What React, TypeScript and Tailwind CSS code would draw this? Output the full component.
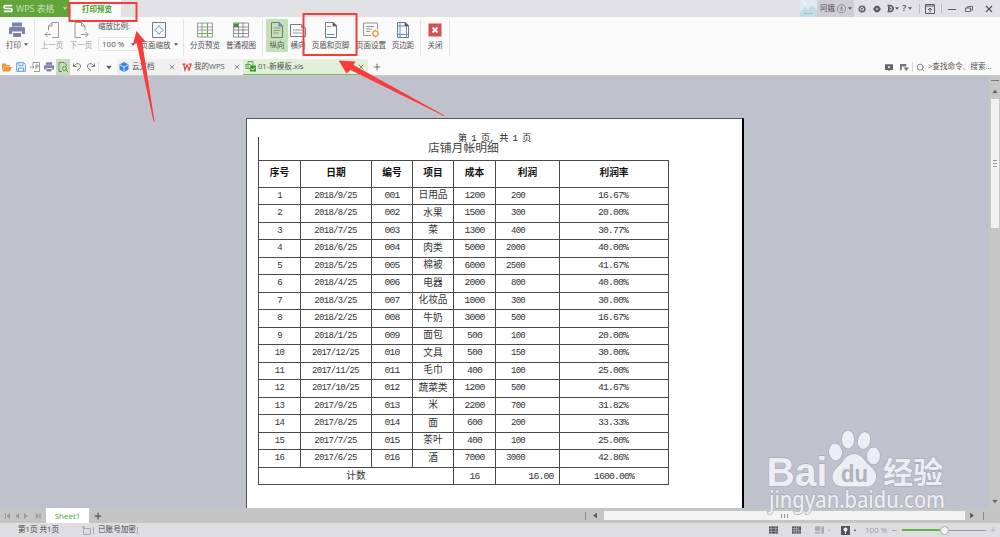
import type { ReactNode } from 'react';
import { FiSearch, FiX, FiPlus } from 'react-icons/fi';

const columns = 'grid grid-cols-[42px_71px_41px_41px_42px_64px_109px]';

const headers = ['序号', '日期', '编号', '项目', '成本', '利润', '利润率'];

const rows = [
    ['2018/9/25', '日用品', '1200', '200', '16.67%'],
    ['2018/8/25', '水果', '1500', '300', '20.00%'],
    ['2018/7/25', '菜', '1300', '400', '30.77%'],
    ['2018/6/25', '肉类', '5000', '2000', '40.00%'],
    ['2018/5/25', '棉被', '6000', '2500', '41.67%'],
    ['2018/4/25', '电器', '2000', '800', '40.00%'],
    ['2018/3/25', '化妆品', '1000', '300', '30.00%'],
    ['2018/2/25', '牛奶', '3000', '500', '16.67%'],
    ['2018/1/25', '面包', '500', '100', '20.00%'],
    ['2017/12/25', '文具', '500', '150', '30.00%'],
    ['2017/11/25', '毛巾', '400', '100', '25.00%'],
    ['2017/10/25', '蔬菜类', '1200', '500', '41.67%'],
    ['2017/9/25', '米', '2200', '700', '31.82%'],
    ['2017/8/25', '面', '600', '200', '33.33%'],
    ['2017/7/25', '茶叶', '400', '100', '25.00%'],
    ['2017/6/25', '酒', '7000', '3000', '42.86%'],
];

function Caret({ className = '' }: { className?: string }) {
    return (
        <svg viewBox="0 0 6 4" className={`w-[4px] h-[3px] shrink-0 ${className}`}>
            <path d="M0 0h6L3 4z" fill="currentColor" />
        </svg>
    );
}

function Tool({ icon, label, className, caret }: { icon: ReactNode; label: string; className: string; caret?: boolean }) {
    return (
        <div className={`h-[33px] mt-[2px] shrink-0 flex flex-col items-center ${className}`}>
            <svg viewBox="0 0 16 16" fill="none" stroke="#77797c" strokeWidth="1" className="w-[16px] h-[16px] mt-[2.5px] shrink-0">{icon}</svg>
            <div className="mt-[2px] flex items-center gap-[3px] leading-[10px] whitespace-nowrap">
                <span>{label}</span>
                {caret && <Caret />}
            </div>
        </div>
    );
}

function Divider({ className = '' }: { className?: string }) {
    return <div className={`w-px h-[37px] mt-[2px] bg-[#e4e4e5] shrink-0 ${className}`}></div>;
}

const printerIcon = (
    <g stroke="none" fill="#7f80b0">
        <rect x="3" y="0.5" width="10" height="4" />
        <path d="M0 6.5q0-1.500 1.500-1.500h13q1.500 0 1.500 1.500V12h-3V9.500H3V12H0z" />
        <rect x="4" y="11" width="8" height="4" />
    </g>
);

const pageIcon = <path d="M2.500 .5h7.500l3.500 3.500v11.500h-11zM10 .5V4h3.500" />;

function TitleBar() {
    return (
        <div className="h-[17px] flex items-center bg-[#e2e2e4] text-[#555]">
            <div className="w-[69px] h-full bg-[#62a53b] flex items-center text-[#c8e1b9]">
                <svg viewBox="0 0 12 10" className="w-[10px] h-[9px] ml-[3px]">
                    <path d="M11 1.500H3.200Q1.200 1.500 1.200 3.200T3.200 5H9q1.800 0 1.800 1.800T9 8.500H1" fill="none" stroke="#fff" strokeWidth="2" />
                </svg>
                <span className="ml-[3px] w-[47px] whitespace-nowrap text-[8.900px]">WPS 表格</span>
                <Caret />
            </div>
            <div className="ml-[2px] w-[50px] h-full bg-[#fafafa] text-[#4c9b2f] text-[7.500px] font-bold flex items-center justify-center pl-[2px] pt-[2px]">打印预览</div>
            <div className="flex-1"></div>
            <svg viewBox="0 0 17 17" className="w-[17px] h-[17px]">
                <rect width="17" height="17" fill="#dfebf0" />
                <circle cx="5" cy="3" r="1.500" fill="#edf3f5" />
                <path d="M0 12l5-5 3 3 4-5 5 5v7H0z" fill="#c4dce6" />
                <path d="M4 13.500h9" stroke="#8fb5c4" strokeDasharray="2 1" />
            </svg>
            <div className="w-[37px] h-full bg-[#cfcfd1] flex items-center pl-[3px] gap-[2px] text-[7.500px]">
                <span>阿娥</span>
                <svg viewBox="0 0 10 10" className="w-[9px] h-[9px] shrink-0" fill="none" stroke="#777">
                    <path d="M3 1h4l2.500 3v3L7 9.500H3L.5 7V4zM3 4.500h4M3.500 7h3M5 3v3" strokeWidth=".8" />
                </svg>
                <Caret />
            </div>
            <svg viewBox="0 0 10 10" className="w-[8px] h-[8px] ml-[4px]" fill="none" stroke="#5d5d5f" strokeWidth="1.800">
                <circle cx="5" cy="5" r="3.600" /><path d="M2 2.500l3 2.500 3-3M5 5l-.5 4" strokeWidth="1.200" />
            </svg>
            <svg viewBox="0 0 10 10" className="w-[8px] h-[8px] ml-[7px]" fill="#5d5d5f">
                <path d="M3 1h4l3 4-3 4H3L0 5z" /><path d="M3.500 5h3" stroke="#ddd" strokeWidth="1.500" />
            </svg>
            <div className="ml-[6px] w-[15px] flex items-center gap-[1px]">
                <svg viewBox="0 0 8 10" className="w-[7px] h-[9px]" fill="none" stroke="#5d5d5f" strokeWidth="1.800"><path d="M.5 1.500h3.500q3 1 3 3.500T4 8.500H.5M2 1v8M3 5h2" /></svg>
                <Caret />
            </div>
            <div className="w-[17px] text-[9.500px] font-semibold flex items-center gap-[2px]">
                <span>?</span>
                <Caret />
            </div>
            <div className="w-px h-[9px] bg-[#b8b8ba]"></div>
            <svg viewBox="0 0 10 10" className="w-[10px] h-[10px] ml-[5px]" fill="none" stroke="#5d5d5f">
                <path d="M.5.5h9v9h-9zM.5 2h9" /><path d="M5 8.500V4M3 6l2-2 2 2" />
            </svg>
            <div className="w-px h-[9px] bg-[#b8b8ba] ml-[6px]"></div>
            <svg viewBox="0 0 8 8" className="w-[8px] h-[8px] ml-[6px]" stroke="#555"><path d="M0 4.500h8" /></svg>
            <svg viewBox="0 0 8 8" className="w-[8px] h-[8px] ml-[9px]" fill="none" stroke="#666"><path d="M.5 3h5v3.500h-5zM2.500 3V1.500h5v3.500h-2" /></svg>
            <svg viewBox="0 0 8 8" className="w-[8px] h-[8px] ml-[12px] mr-[7px]" stroke="#555" strokeWidth="1.200"><path d="M1 1l6 6M7 1l-6 6" /></svg>
        </div>
    );
}

function Ribbon() {
    return (
        <div className="h-[42px] flex bg-[#fafafa] text-[7.500px] text-[#4f4f50]">
            <Tool className="w-[34px]" icon={printerIcon} label="打印" caret />
            <Divider />
            <Tool className="ml-[3px] w-[28px] text-[#a0a0a1] [&>svg]:opacity-75" label="上一页" icon={<><path d="M4.500 8.500V4L8 .5h6.500v15H8M8 .5V4H4.500" /><path d="M7 12.500H1M3.500 10L1 12.500 3.500 15" /></>} />
            <Tool className="ml-px w-[28px] text-[#a0a0a1] [&>svg]:opacity-75" label="下一页" icon={<><path d="M12 8.500V4L8.500.5H2v15h6M8.500.5V4H12" /><path d="M8 12.500h7M12.500 10l2.500 2.500-2.500 2.500" /></>} />
            <div className="ml-[3px] w-[40px] flex flex-col">
                <div className="mt-[4px] h-[10px] leading-[10px] whitespace-nowrap">缩放比例:</div>
                <div className="mt-[6px] h-[14px] border border-[#e5e5e6] flex items-center justify-between pl-[3px] pr-[2px] text-[8px] leading-[10px]">
                    <span>100 %</span>
                    <Caret />
                </div>
            </div>
            <Tool className="ml-[2px] w-[38px]" label="页面缩放" caret icon={<><path d="M1.500.5h13v15h-13z" /><path d="M6 6.500L8 3.500l2 3M6 9.500l2 3 2-3M6 6l-2.500 2L6 10M10 6l2.500 2L10 10" stroke="#6f9fe0" /></>} />
            <Divider className="ml-[5px]" />
            <Tool className="ml-[3px] w-[36px]" label="分页预览" icon={<><path d="M.5 1h15v14H.5zM.5 5h15M.5 8h15M5 1v14" strokeOpacity=".7" /><path d="M.5 11.500h15M10.500 1v14" stroke="#71aa55" /></>} />
            <Tool className="w-[36px]" label="普通视图" icon={<><path d="M.5 1h15v14H.5zM.5 5h15M.5 8h15M.5 11.500h15M5.500 1v14M10 1v14" strokeOpacity=".8" /><path d="M1 1.500h4.500v3.500H1z" fill="#4a8e38" stroke="none" /></>} />
            <Divider className="ml-[3px]" />
            <Tool className="ml-[3px] w-[22px] bg-[#c4e0b9]" label="纵向" icon={<>{pageIcon}<path d="M4.500 6h7M4.500 8.500h7M4.500 11h5" strokeWidth=".7" /><path d="M10 0l4 4h-4z" fill="#5c89d3" stroke="none" /></>} />
            <Tool className="w-[20px]" label="横向" icon={<><path d="M.5 2.500H11L15.500 6v8.500H.5z" /><path d="M3 8h9M3 11h9" strokeWidth=".7" /><path d="M11 2l5 4h-5z" fill="#6d99e0" stroke="none" /></>} />
            <Tool className="w-[45px]" label="页眉和页脚" icon={<>{pageIcon}<path d="M10 0l4 4h-4z" fill="#555" stroke="none" /><path d="M4 4.500h4M4 12.500h7.500" stroke="#5688e5" /></>} />
            <Tool className="w-[36px]" label="页面设置" icon={<><path d="M8 13.500H.5V1h14v6M3 4.500h8M3 7h6M3 9.500h4" strokeWidth=".8" /><circle cx="12.500" cy="11.500" r="2.700" stroke="#eb9d41" strokeWidth="1.300" /><path d="M12.500 7.700v1.300M12.500 14v1.500M8.800 11.500H10M15 11.500h1" stroke="#eb9d41" /></>} />
            <Tool className="w-[28px]" label="页边距" icon={<>{pageIcon}<path d="M10 0l4 4h-4z" fill="#555" stroke="none" /><path d="M5 1v14M11.500 4v11M3 4h7M3 12.500h10" stroke="#5c8ee5" /></>} />
            <Divider className="ml-[3px]" />
            <Tool className="ml-[2px] w-[24px]" label="关闭" icon={<><rect x="1.500" y="1.500" width="13" height="13" fill="#cf5254" stroke="none" /><path d="M5.500 5.500l5 5M10.500 5.500l-5 5" stroke="#fff" strokeWidth="1.800" /></>} />
            <Divider className="ml-[2px]" />
        </div>
    );
}

function QuickIcon({ children, className = '' }: { children: ReactNode; className?: string }) {
    return (
        <div className={`w-[14px] h-full flex items-center justify-center ${className}`}>
            <svg viewBox="0 0 10 10" fill="none" stroke="#77797c" className="w-[10px] h-[10px]">{children}</svg>
        </div>
    );
}

function TabBar() {
    return (
        <div className="h-[17px] flex items-center bg-[#fafafa] border-b border-[#c8cacf] text-[7.500px] text-[#555]">
            <QuickIcon><path d="M0 9V1.500h3.500l1 1.500H8v1.500H2.500zM2.500 5H10L8 9.500H.5z" fill="#f29231" stroke="none" /></QuickIcon>
            <QuickIcon><path d="M.7.7h7l1.600 1.600v7H.7zM3 .7v3h4v-3M2.500 9V6h5v3" stroke="#5b9ae8" /></QuickIcon>
            <QuickIcon><path d="M3 3.500V.5h6.500v9H4M0 5h4M2.500 3.500L4 5 2.500 6.500M6 7V3h2v2H6" stroke="#999" /></QuickIcon>
            <QuickIcon><g transform="scale(.625)">{printerIcon}</g></QuickIcon>
            <QuickIcon className="bg-[#c4e0b9]"><path d="M4 9.500H1V.5h5.500L8.500 3v1" /><circle cx="6.500" cy="6.500" r="2" stroke="#56923f" /><path d="M8 8l2 2" stroke="#56923f" /></QuickIcon>
            <QuickIcon><path d="M1.500 1.500v3h3M2 4q3-4 6-1.500 2 3-3 6" /></QuickIcon>
            <QuickIcon><path d="M8.500 1.500v3h-3M8 4Q5 0 2 2.500q-2 3 3 6" /></QuickIcon>
            <div className="w-px h-[11px] bg-[#e0e0e1]"></div>
            <div className="w-[18px] flex justify-center pl-[2px]"><Caret className="scale-140" /></div>
            <div className="w-[64px] h-full bg-[#f0f0f1] flex items-center">
                <svg viewBox="0 0 10 10" className="w-[10px] h-[10px] ml-[2px]"><path d="M5 0l4.500 2.500v5L5 10 .5 7.500v-5z" fill="#3b83ec" /><path d="M1 3l4 2 4-2M5 5v4.500" stroke="#e0ecff" fill="none" /></svg>
                <span className="ml-[3px] flex-1">云文档</span>
                <FiX size={8} className="mr-[5px]" />
            </div>
            <div className="w-[62px] h-full bg-[#f3f3f4] flex items-center">
                <svg viewBox="0 0 12 10" className="w-[10px] h-[9px] ml-[1px]"><path d="M.5 1h4M2 1l1.500 7L6 2l2.500 6L11 1H8" fill="none" stroke="#e24545" strokeWidth="1.500" /></svg>
                <span className="ml-[2px] flex-1 whitespace-nowrap">我的WPS</span>
                <FiX size={8} className="mr-[2px]" />
            </div>
            <div className="w-[125px] h-full bg-[#e2f0da] border-b border-[#78b45f] flex items-center">
                <svg viewBox="0 0 11 11" className="w-[11px] h-[11px] ml-[2px]">
                    <path d="M3 .5h5v7H3zM.5 3.500h5M.5 7.500h5M1 3v5" fill="#d8edd0" stroke="#65a54d" />
                    <rect x="5" y="4.500" width="6" height="6" fill="#2fa126" /><path d="M6 7.500l1.500 1.500L10 6.500" stroke="#fff" fill="none" />
                </svg>
                <span className="ml-[2px] flex-1 text-[7.600px]">01-新模板.xls</span>
                <FiX size={8} className="mr-[3px]" />
            </div>
            <FiPlus size={10} className="ml-[4px]" />
            <div className="flex-1"></div>
            <svg viewBox="0 0 10 10" className="w-[8px] h-[9px]"><path d="M0 1h10v7H6v1H4V8H0z" fill="#666" /><path d="M4 3l3 1.500L4 6z" fill="#fff" /></svg>
            <svg viewBox="0 0 10 10" className="w-[9px] h-[9px] ml-[7px]"><path d="M0 1h7v3H2v4H0zM4 5h6L7 9z" fill="#777" /></svg>
            <div className="w-px h-[10px] bg-[#d8d8d9] ml-[3px] mr-[3px]"></div>
            <FiSearch size={9} className="text-[#666]" />
            <span className="ml-[3px] w-[72px] whitespace-nowrap text-[7.600px]">&gt;查找命令、搜索...</span>
        </div>
    );
}

function Sheet() {
    return (
        <div className="ml-[11px] mt-[41px] w-[411px] border-l border-t border-[#4a4a4a] text-[9.700px] text-[#333]">
            <div className={`${columns} h-[26.500px] font-bold text-[#111]`}>
                {headers.map((h) => (
                    <div key={h} className="border-r border-b border-[#4a4a4a] flex items-center justify-center pt-[1px]">{h}</div>
                ))}
            </div>
            {rows.map(([date, name, cost, profit, rate], i) => (
                <div key={date} className={`${columns} h-[17.500px] [&>div]:border-r [&>div]:border-b [&>div]:border-[#4a4a4a] [&>div]:flex [&>div]:items-center [&>div]:justify-center [&>div]:leading-[14px] [&>div]:whitespace-nowrap`}>
                    <div className="text-[9px] tracking-[-0.700px]">{i + 1}</div>
                    <div className="text-[9px] tracking-[-0.700px] pr-px">{date}</div>
                    <div className="tracking-[-0.800px]">{String(i + 1).padStart(3, '0')}</div>
                    <div className="pt-px">{name}</div>
                    <div className="tracking-[-0.800px]">{cost}</div>
                    <div className="text-[9px] tracking-[-0.700px]">
                        <span className={profit.length > 3 ? 'w-[40px] text-center -ml-[24px]' : 'w-[40px] text-center -ml-[19px]'}>{profit}</span>
                    </div>
                    <div className="tracking-[-0.800px] pr-[2px]">{rate}</div>
                </div>
            ))}
            <div className="grid grid-cols-[195px_42px_64px_109px] h-[17.500px] tracking-[-0.800px] [&>div]:border-r [&>div]:border-b [&>div]:border-[#4a4a4a] [&>div]:flex [&>div]:items-center [&>div]:justify-center [&>div]:pt-[2px]">
                <div className="tracking-normal">计数</div>
                <div>16</div>
                <div className="pl-[27px]">16.00</div>
                <div>1600.00%</div>
            </div>
        </div>
    );
}

function Workspace() {
    return (
        <div className="h-[432px] flex bg-[#bfc2cc]">
            <div className="flex-1 flex">
                <div className="relative ml-[246px] mt-[42px] w-[497.500px] h-[390px] overflow-hidden bg-white border-l border-t border-[#555] border-r-2 border-r-black font-['Liberation_Mono','Noto_Sans_CJK_SC',monospace]">
                    <Sheet />
                    <div className="absolute left-[11px] top-[18px] w-px h-[24px] bg-[#4a4a4a]"></div>
                    <div className="absolute left-[211px] top-[14px] text-[9px] leading-[12px] tracking-[-0.550px] whitespace-nowrap text-[#222]">第 1 页, 共 1 页</div>
                    <div className="absolute left-[181px] top-[23px] text-[11.800px] leading-[14px] whitespace-nowrap text-[#444]">店铺月帐明细</div>
                </div>
            </div>
            <div className="w-[11px] bg-[#c6c6c7] flex flex-col items-center text-[#666]">
                <div className="w-[8px] h-px bg-[#777] mt-[4px]"></div>
                <Caret className="rotate-180 mt-[9px] scale-140" />
                <div className="w-[8px] h-[129px] mt-[6px] bg-[#f2f2f3] flex flex-col items-center justify-center gap-[2px]">
                    <div className="w-[4px] h-px bg-[#999]"></div>
                    <div className="w-[4px] h-px bg-[#999]"></div>
                    <div className="w-[4px] h-px bg-[#999]"></div>
                </div>
                <div className="flex-1"></div>
                <Caret className="mb-[5px] scale-140" />
            </div>
        </div>
    );
}

function SheetTabs() {
    return (
        <div className="h-[15px] flex items-center bg-[#c5c5c6] text-[#555]">
            <svg viewBox="0 0 40 8" className="w-[40px] h-[8px] ml-[3px]" fill="#999">
                <path d="M2 1h1v6H2zM7 1v6L3.500 4zM16 1v6l-3.500-3zM21 1v6l3.500-3zM33 1v6l3-3zM36.500 1h1v6h-1z" />
            </svg>
            <div className="ml-[3px] w-[43px] h-full bg-white text-[#4da630] text-[8px] flex items-center justify-center">Sheet1</div>
            <FiPlus size={10} strokeWidth={3} className="ml-[4px]" />
            <div className="flex-1"></div>
            <div className="w-px h-[8px] bg-[#8c8c8c]"></div>
            <Caret className="rotate-90 ml-[7px] scale-140" />
            <div className="ml-[7px] w-[361px] h-[9px] bg-[#f3f3f4] flex items-center justify-center gap-[2px]">
                <div className="w-px h-[4px] bg-[#999]"></div>
                <div className="w-px h-[4px] bg-[#999]"></div>
                <div className="w-px h-[4px] bg-[#999]"></div>
            </div>
            <Caret className="-rotate-90 ml-[5px] scale-140" />
            <div className="w-px h-[8px] bg-[#8c8c8c] ml-[9px] mr-[16px]"></div>
        </div>
    );
}

function StatusBar() {
    return (
        <div className="h-[14px] flex items-center bg-[#dedee0] text-[7.600px] text-[#444]">
            <span className="ml-[18px] w-[64px] whitespace-nowrap">第1页 共1页</span>
            <svg viewBox="0 0 9 9" className="w-[9px] h-[9px]" fill="none" stroke="#aaa"><path d="M1.500 2.500h7v6h-7zM0 1h3M1.500 0v3" /></svg>
            <div className="ml-[2px] w-px h-[7px] bg-[#aaa]"></div>
            <span className="ml-[4px] whitespace-nowrap">已账号加密</span>
            <div className="ml-[1px] w-px h-[7px] bg-[#aaa]"></div>
            <div className="flex-1"></div>
            <svg viewBox="0 0 10 8" className="w-[9px] h-[8px]"><path d="M0 0h10v8H0z" fill="#555" /><path d="M0 2.500h10M0 5.500h10M2.500 0v8M7.500 0v8" stroke="#c8c8c8" strokeWidth=".6" /></svg>
            <svg viewBox="0 0 10 8" className="w-[9px] h-[8px] ml-[14px]"><path d="M0 0h10v8H0z" fill="#555" /><path d="M0 2.500h7M0 5h10M2.500 0v8M5 0v8M7.500 0v8" stroke="#d0d0d0" strokeWidth=".6" /></svg>
            <svg viewBox="0 0 10 8" className="w-[9px] h-[8px] ml-[14px]"><path d="M0 0h10v8H0z" fill="#aaa" /><path d="M0 5.500h6M6.500 0v8" stroke="#e5e5e5" /></svg>
            <Caret className="ml-[3px] text-[#aaa] scale-75" />
            <svg viewBox="0 0 9 9" className="w-[9px] h-[9px] ml-[10px]"><path d="M0 0h9v9H0z" fill="#555" /><circle cx="4.500" cy="3.500" r="2" fill="#eee" /><path d="M4.500 4v4" stroke="#eee" /></svg>
            <Caret className="ml-[3px] scale-75" />
            <span className="ml-[8px] w-[27px] text-[8px] text-[#999] whitespace-nowrap">100 %</span>
            <div className="w-[5px] h-px bg-[#aaa]"></div>
            <div className="ml-[5px] w-[38px] h-[1.500px] bg-[#62b346]"></div>
            <div className="w-[9px] h-[9px] rounded-full bg-[#f5f5f5] border border-[#aaa]"></div>
            <div className="w-[37px] h-px bg-[#999]"></div>
            <FiPlus size={8} className="ml-[3px] mr-[3px] text-[#aaa]" />
        </div>
    );
}

// Red callouts and the site watermark sit above the whole window
function Overlay() {
    return (
        <svg viewBox="0 0 1000 537" className="absolute inset-0 w-[1000px] h-[537px] pointer-events-none">
            <g fill="none" stroke="#f43d3b" strokeWidth="2">
                <path d="M69.500 3h67v18h-67zM303.500 14h53v41h-53z" />
            </g>
            <g fill="#f83c3b">
                <path d="M136.500 31L145.500 41.500L142.200 42.200L154.500 121.500L153.500 121.500L136.800 43.500L133 44z" />
                <path d="M338.500 60.500L355.500 61.500L353.500 65L444.500 115.500L444 116L350.500 70L346.500 73.500z" />
            </g>
            <g fill="#eceef3" stroke="#a9acb5" strokeWidth="1.400" paintOrder="stroke">
                <text x="766.500" y="485.500" fontSize="40" fontWeight="700" textLength="61" lengthAdjust="spacingAndGlyphs" fontFamily="Liberation Sans, sans-serif">Bai</text>
                <ellipse cx="835.500" cy="452" rx="6.500" ry="8.500" transform="rotate(-8 835.5 452)" />
                <ellipse cx="848" cy="439.500" rx="6.200" ry="9" />
                <ellipse cx="864" cy="440.500" rx="6.200" ry="8.500" transform="rotate(12 864 440.5)" />
                <ellipse cx="873.500" cy="456" rx="6.500" ry="8.500" />
                <path d="M854 454C861 454 864 460 868 464C873 469 877 472 876 478C875 484 871 486.500 866 486.500H843C836 486.500 832 482 832.500 476C833 470 839 467 843 461C846 457 849 454 854 454z" />
                <text x="883" y="483" fontSize="30" fontWeight="700" textLength="60" fontFamily="Noto Sans CJK SC, sans-serif">经验</text>
                <text x="769" y="508" fontSize="23" textLength="176" lengthAdjust="spacingAndGlyphs" fontFamily="Noto Sans, sans-serif" fontWeight="500">jingyan.baidu.com</text>
            </g>
            <text x="841" y="482" fontSize="24" fontWeight="700" fill="#afb2bb" textLength="27" lengthAdjust="spacingAndGlyphs" fontFamily="Liberation Sans, sans-serif">du</text>
        </svg>
    );
}

export default function App() {
    return (
        <div className="relative w-[1000px] h-[537px] overflow-hidden font-['Open_Sans','Noto_Sans_CJK_SC',sans-serif]">
            <TitleBar />
            <Ribbon />
            <TabBar />
            <Workspace />
            <SheetTabs />
            <StatusBar />
            <Overlay />
        </div>
    );
}
